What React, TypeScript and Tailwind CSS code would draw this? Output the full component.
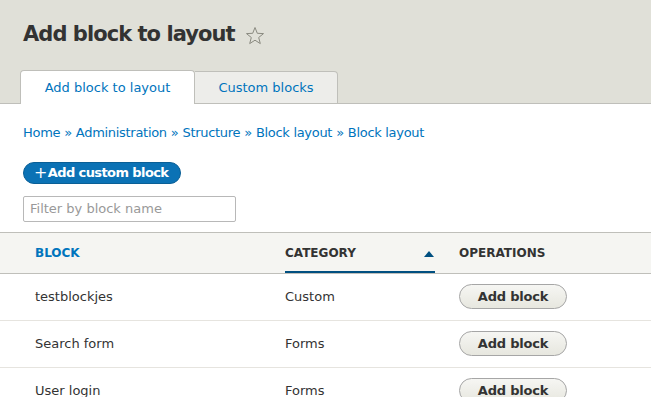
import * as React from "react"

const rows = [
  { name: "testblockjes", category: "Custom" },
  { name: "Search form", category: "Forms" },
  { name: "User login", category: "Forms" },
]

const crumbs = ["Home", "Administration", "Structure", "Block layout", "Block layout"]

const Star = () => (
  <svg width="20" height="20" viewBox="0 0 20 20" className="ml-[10px] mt-[2px]">
    <path
      d="M10 1.5 L12.3 7.3 L18.5 7.6 L13.7 11.5 L15.3 17.6 L10 14.2 L4.7 17.6 L6.3 11.5 L1.5 7.6 L7.7 7.3 Z"
      fill="none"
      stroke="#8a8a80"
      strokeWidth="1"
      strokeLinejoin="round"
    />
  </svg>
)

export default function App() {
  return (
    <div className="min-h-[397px] bg-white font-['DejaVu_Sans',sans-serif] text-[#333]">
      {/* page header */}
      <header className="bg-[#e0e0d8] border-b border-[#bfbfba] pt-[20px] px-[20px]">
        <div className="flex items-center pl-[3px] h-[30px]">
          <h1 className="text-[21px] font-bold tracking-[-0.95px] text-[#333]">
            Add block to layout
          </h1>
          <Star />
        </div>
        <nav className="flex mt-[20px] -mb-px">
          <div className="w-[175px] h-[34px] bg-white border border-b-0 border-[#bfbfba] rounded-t-[4px] flex items-center justify-center text-[13px] text-[#0074bd]">
            Add block to layout
          </div>
          <div className="w-[143px] h-[33px] mt-[1px] bg-[#ededea] border border-l-0 border-[#bfbfba] rounded-tr-[4px] flex items-center justify-center text-[13px] text-[#0074bd]">
            Custom blocks
          </div>
        </nav>
      </header>

      <main className="px-[23px]">
        <div className="pt-[19px] text-[13px] tracking-[-0.3px] text-[#0074bd] flex gap-[4px]">
          {crumbs.map((c, i) => (
            <React.Fragment key={i}>
              {i > 0 && <span className="text-[#0074bd]">»</span>}
              <span>{c}</span>
            </React.Fragment>
          ))}
        </div>

        <div className="mt-[18px]">
          <span className="inline-flex items-center h-[22px] pl-[10px] pr-[12px] rounded-full bg-[#0b72b5] border border-[#0a5f96] text-white text-[13px] font-bold tracking-[-0.6px]">
            <span className="text-[16px] font-normal mr-[1px] leading-none">+</span>
            Add custom block
          </span>
        </div>

        <div className="mt-[11px] w-[213px] h-[26px] border border-[#b8b8b8] rounded-[2px] flex items-center px-[6px] text-[13px] text-[#999]">
          Filter by block name
        </div>
      </main>

      <table className="mt-[10px] w-full border-collapse text-[13px]">
        <thead>
          <tr className="bg-[#f5f5f2] border-t border-b border-[#bfbfba] h-[40px] text-left text-[12px] font-bold">
            <th className="pl-[35px] w-[285px] text-[#0074bd]">BLOCK</th>
            <th className="w-[174px] p-0">
              <div className="h-[40px] w-[150px] flex items-center justify-between border-b-[2px] border-[#004f80] text-[#333]">
                <span className="pt-[2px]">CATEGORY</span>
                <svg width="10" height="6" viewBox="0 0 10 6" className="mr-[1px] mt-[4px]">
                  <path d="M0 6 L5 0 L10 6 Z" fill="#004f80" />
                </svg>
              </div>
            </th>
            <th className="text-[#333]">OPERATIONS</th>
          </tr>
        </thead>
        <tbody>
          {rows.map((r) => (
            <tr key={r.name} className="border-b border-[#e6e4df] h-[47px]">
              <td className="pl-[35px] text-[#333]">{r.name}</td>
              <td className="text-[#333]">{r.category}</td>
              <td>
                <span className="inline-flex items-center justify-center w-[108px] h-[25px] rounded-full border border-[#a6a6a6] bg-gradient-to-b from-[#f6f6f3] to-[#e7e7df] text-[13px] font-bold tracking-[-0.2px] text-[#333]">
                  Add block
                </span>
              </td>
            </tr>
          ))}
        </tbody>
      </table>
    </div>
  )
}
